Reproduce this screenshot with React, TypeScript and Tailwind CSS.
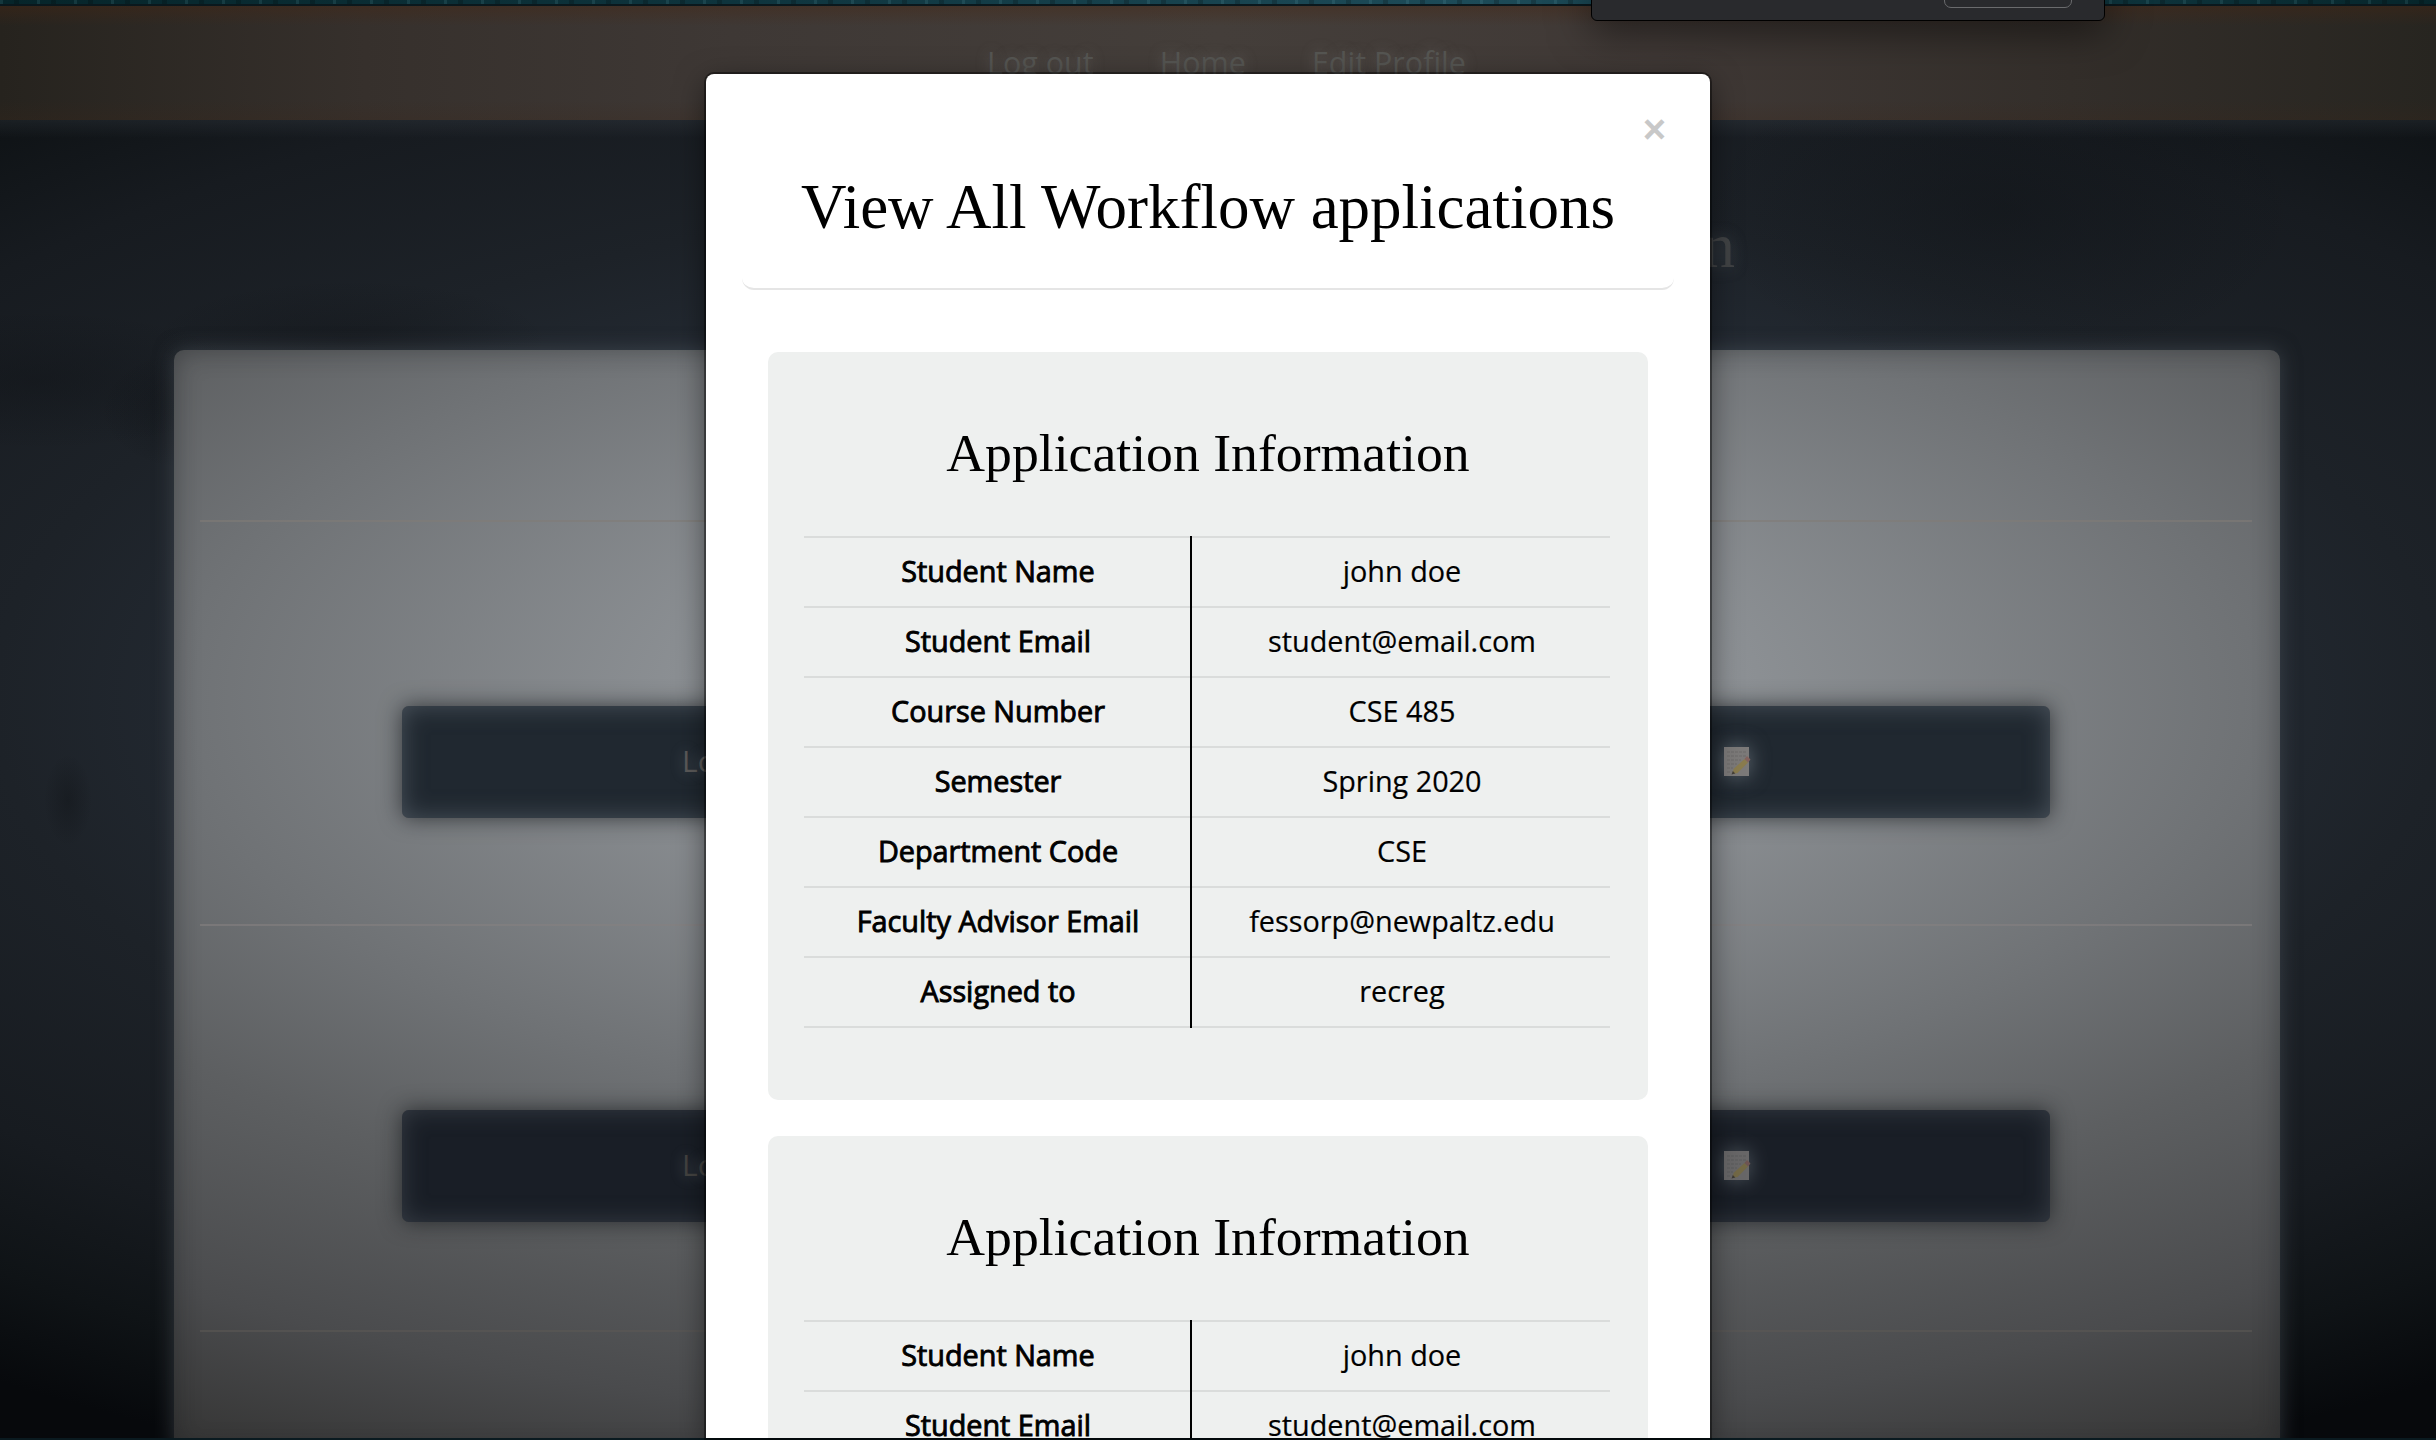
import React from "react";

const rows: [string, string][] = [
  ["Student Name", "john doe"],
  ["Student Email", "student@email.com"],
  ["Course Number", "CSE 485"],
  ["Semester", "Spring 2020"],
  ["Department Code", "CSE"],
  ["Faculty Advisor Email", "fessorp@newpaltz.edu"],
  ["Assigned to", "recreg"],
];

function ApplicationCard() {
  return (
    <section className="h-[748px] shrink-0 rounded-[10px] bg-[#eef0ef] px-9">
      <h2 className="flex h-[184px] items-center justify-center pt-[18px] font-['Liberation_Serif',serif] text-[53.7px] whitespace-nowrap text-black">
        Application Information
      </h2>
      <div className="w-[806px] border-b-2 border-[#dadcdb]">
        {rows.map(([label, value], i) => (
          <div key={label} className="flex h-[70px] text-center text-[28.8px] leading-[66px] text-black">
            <div className="w-[386px] border-t-2 border-[#dadcdb] pl-0.5 [-webkit-text-stroke:0.9px_#000]">{label}</div>
            <div className={i === rows.length - 1 ? "-mb-0.5 w-0.5 bg-black" : "w-0.5 bg-black"} />
            <div className="flex-1 border-t-2 border-[#dadcdb] pl-0.5 [-webkit-text-stroke:0.2px_#000]">{value}</div>
          </div>
        ))}
      </div>
    </section>
  );
}

function MemoIcon() {
  return (
    <svg viewBox="0 0 27 30" className="h-[30px] w-[27px] shrink-0 overflow-visible drop-shadow-[0_0_10px_rgba(150,160,170,0.55)]">
      <rect x="0" y="0" width="25" height="29" fill="#7c7a79" />
      <path d="M3 5h19M3 9h19M3 13h14M3 17h10M3 21h6M3 25h4" stroke="#6c6b6a" strokeWidth="1" strokeDasharray="3 1" />
      <path d="M8 27l2-5.500L20.500 12l3.500 3.500L13.500 26z" fill="#8a7c4e" />
      <path d="M20.500 12l2.500-3 3.500 3.500-2.500 3z" fill="#84625d" />
      <path d="M7.500 27.500l1.300-3.500 2.500 2.500z" fill="#454039" />
    </svg>
  );
}

function BackdropButton({ dim = false }: { dim?: boolean }) {
  const tone = dim
    ? "bg-[#191e26] text-[#444341] shadow-[0_0_22px_rgba(20,23,26,0.7),inset_0_0_24px_rgba(90,98,106,0.45)]"
    : "bg-[#202830] text-[#5c5a59] shadow-[0_0_22px_rgba(20,23,26,0.7),inset_0_0_24px_rgba(115,125,135,0.5)]";
  return (
    <div className={`mx-auto flex h-28 w-[1648px] items-center justify-between rounded-[7px] pr-[299px] pl-[280px] text-[30px] ${tone}`}>
      <span className="-mt-[3px] [text-shadow:0_0_14px_rgba(150,160,170,0.45)]">Lock</span>
      <div className={dim ? "-mt-px opacity-80" : "-mt-px"}>
        <MemoIcon />
      </div>
    </div>
  );
}

export default function App() {
  return (
    <div className="relative flex h-[1440px] w-[2436px] flex-col overflow-hidden bg-[#0a1a20] font-['Open_Sans',sans-serif]">
      <div className="h-1 shrink-0 bg-[repeating-linear-gradient(90deg,rgba(120,190,200,0.12)_0_3px,transparent_3px_14px,rgba(0,0,0,0.2)_14px_19px,transparent_19px_37px),linear-gradient(90deg,#06252a,#0e343d_30%,#1d4b58_60%,#123c46_80%,#06252a)]" />
      <div className="h-0.5 shrink-0 bg-[#0a181d]" />
      <header className="h-[114px] shrink-0 bg-[linear-gradient(180deg,rgba(70,38,18,0.4),transparent_20px,transparent_94px,rgba(60,38,24,0.2)),linear-gradient(90deg,#26231e,#36302c_15%,#3e3835_30%,#443e3a_50%,#403936_68%,#332e2a_85%,#272520)]">
        <nav className="ml-[987px] flex gap-[66px] pt-9 text-[30.5px] leading-[40px] text-[#555552] [text-shadow:0_0_14px_rgba(150,150,150,0.4)]">
          <span>Log out</span>
          <span>Home</span>
          <span>Edit Profile</span>
        </nav>
      </header>
      <main className="relative h-[1318px] shrink-0 overflow-hidden bg-[linear-gradient(180deg,rgba(80,90,100,0.18),transparent_18px),radial-gradient(ellipse_90px_60px_at_190px_290px,rgba(8,10,13,0.3),transparent),radial-gradient(ellipse_220px_70px_at_40px_260px,rgba(8,10,13,0.25),transparent),radial-gradient(ellipse_200px_60px_at_350px_220px,rgba(12,14,17,0.3),transparent),radial-gradient(ellipse_24px_46px_at_68px_680px,rgba(10,12,15,0.3),transparent),radial-gradient(ellipse_300px_160px_at_2000px_90px,rgba(10,13,16,0.3),transparent),radial-gradient(ellipse_2040px_850px_at_1218px_580px,#29323b_0%,#242b34_45%,#1d2228_60%,#171b20_78%,#0f1316_90%,#07090c_100%)]">
        <h1 className="flex h-[230px] items-center justify-end pt-[22px] pr-[701px] font-['Liberation_Serif',serif] text-[64px] text-[#414345] [text-shadow:0_0_16px_rgba(110,120,130,0.4)]">n</h1>
        <div className="mx-auto h-[1100px] w-[2106px] translate-x-[9px] rounded-[10px] bg-[radial-gradient(ellipse_2040px_850px_at_1044px_350px,#999da0_0%,#8d9195_25%,#6f7275_51%,#5d5f61_66%,#4a4b4d_86%,#373737_100%)] pt-[170px] pr-7 pl-[26px] shadow-[0_0_20px_rgba(85,93,101,0.5),inset_0_0_26px_rgba(20,22,24,0.4)]">
          <div className="h-0.5 bg-[#807b76]/60" />
          <div className="pt-[184px]"><BackdropButton /></div>
          <div className="mt-[106px] h-0.5 bg-[#858180]/60" />
          <div className="pt-[184px]"><BackdropButton dim /></div>
          <div className="mt-[108px] h-0.5 bg-[#5c5855]/60" />
        </div>
      </main>
      <div className="h-0.5 bg-[#0a1a20]" />

      <div className="absolute -top-5 left-[1591px] h-[41px] w-[514px] rounded-[6px] border border-black bg-[#292a2d] shadow-[0_10px_40px_rgba(0,0,0,0.5)]">
        <div className="mr-[32px] ml-auto h-[27px] w-[128px] rounded-[7px] border border-[#6a6b6d]" />
      </div>

      <div role="dialog" className="absolute top-[74px] left-[706px] flex h-[1364px] w-[1004px] flex-col overflow-hidden rounded-t-[8px] bg-white px-9 shadow-[0_0_0_2px_rgba(0,0,0,0.4),0_8px_30px_rgba(0,0,0,0.5)]">
        <div className="flex h-[216px] shrink-0 flex-col rounded-b-[12px] border-b-2 border-[#e5e5e5]">
          <button className="mr-2 self-end pt-8 font-['Liberation_Sans',sans-serif] text-[40px] leading-[46px] font-bold text-[#c8c8c8]">×</button>
          <h1 className="text-center font-['Liberation_Serif',serif] text-[63px] leading-[111px] whitespace-nowrap text-black">
            View All Workflow applications
          </h1>
        </div>
        <div className="flex flex-col gap-9 px-[26px] pt-[62px]">
          <ApplicationCard />
          <ApplicationCard />
        </div>
      </div>
    </div>
  );
}
